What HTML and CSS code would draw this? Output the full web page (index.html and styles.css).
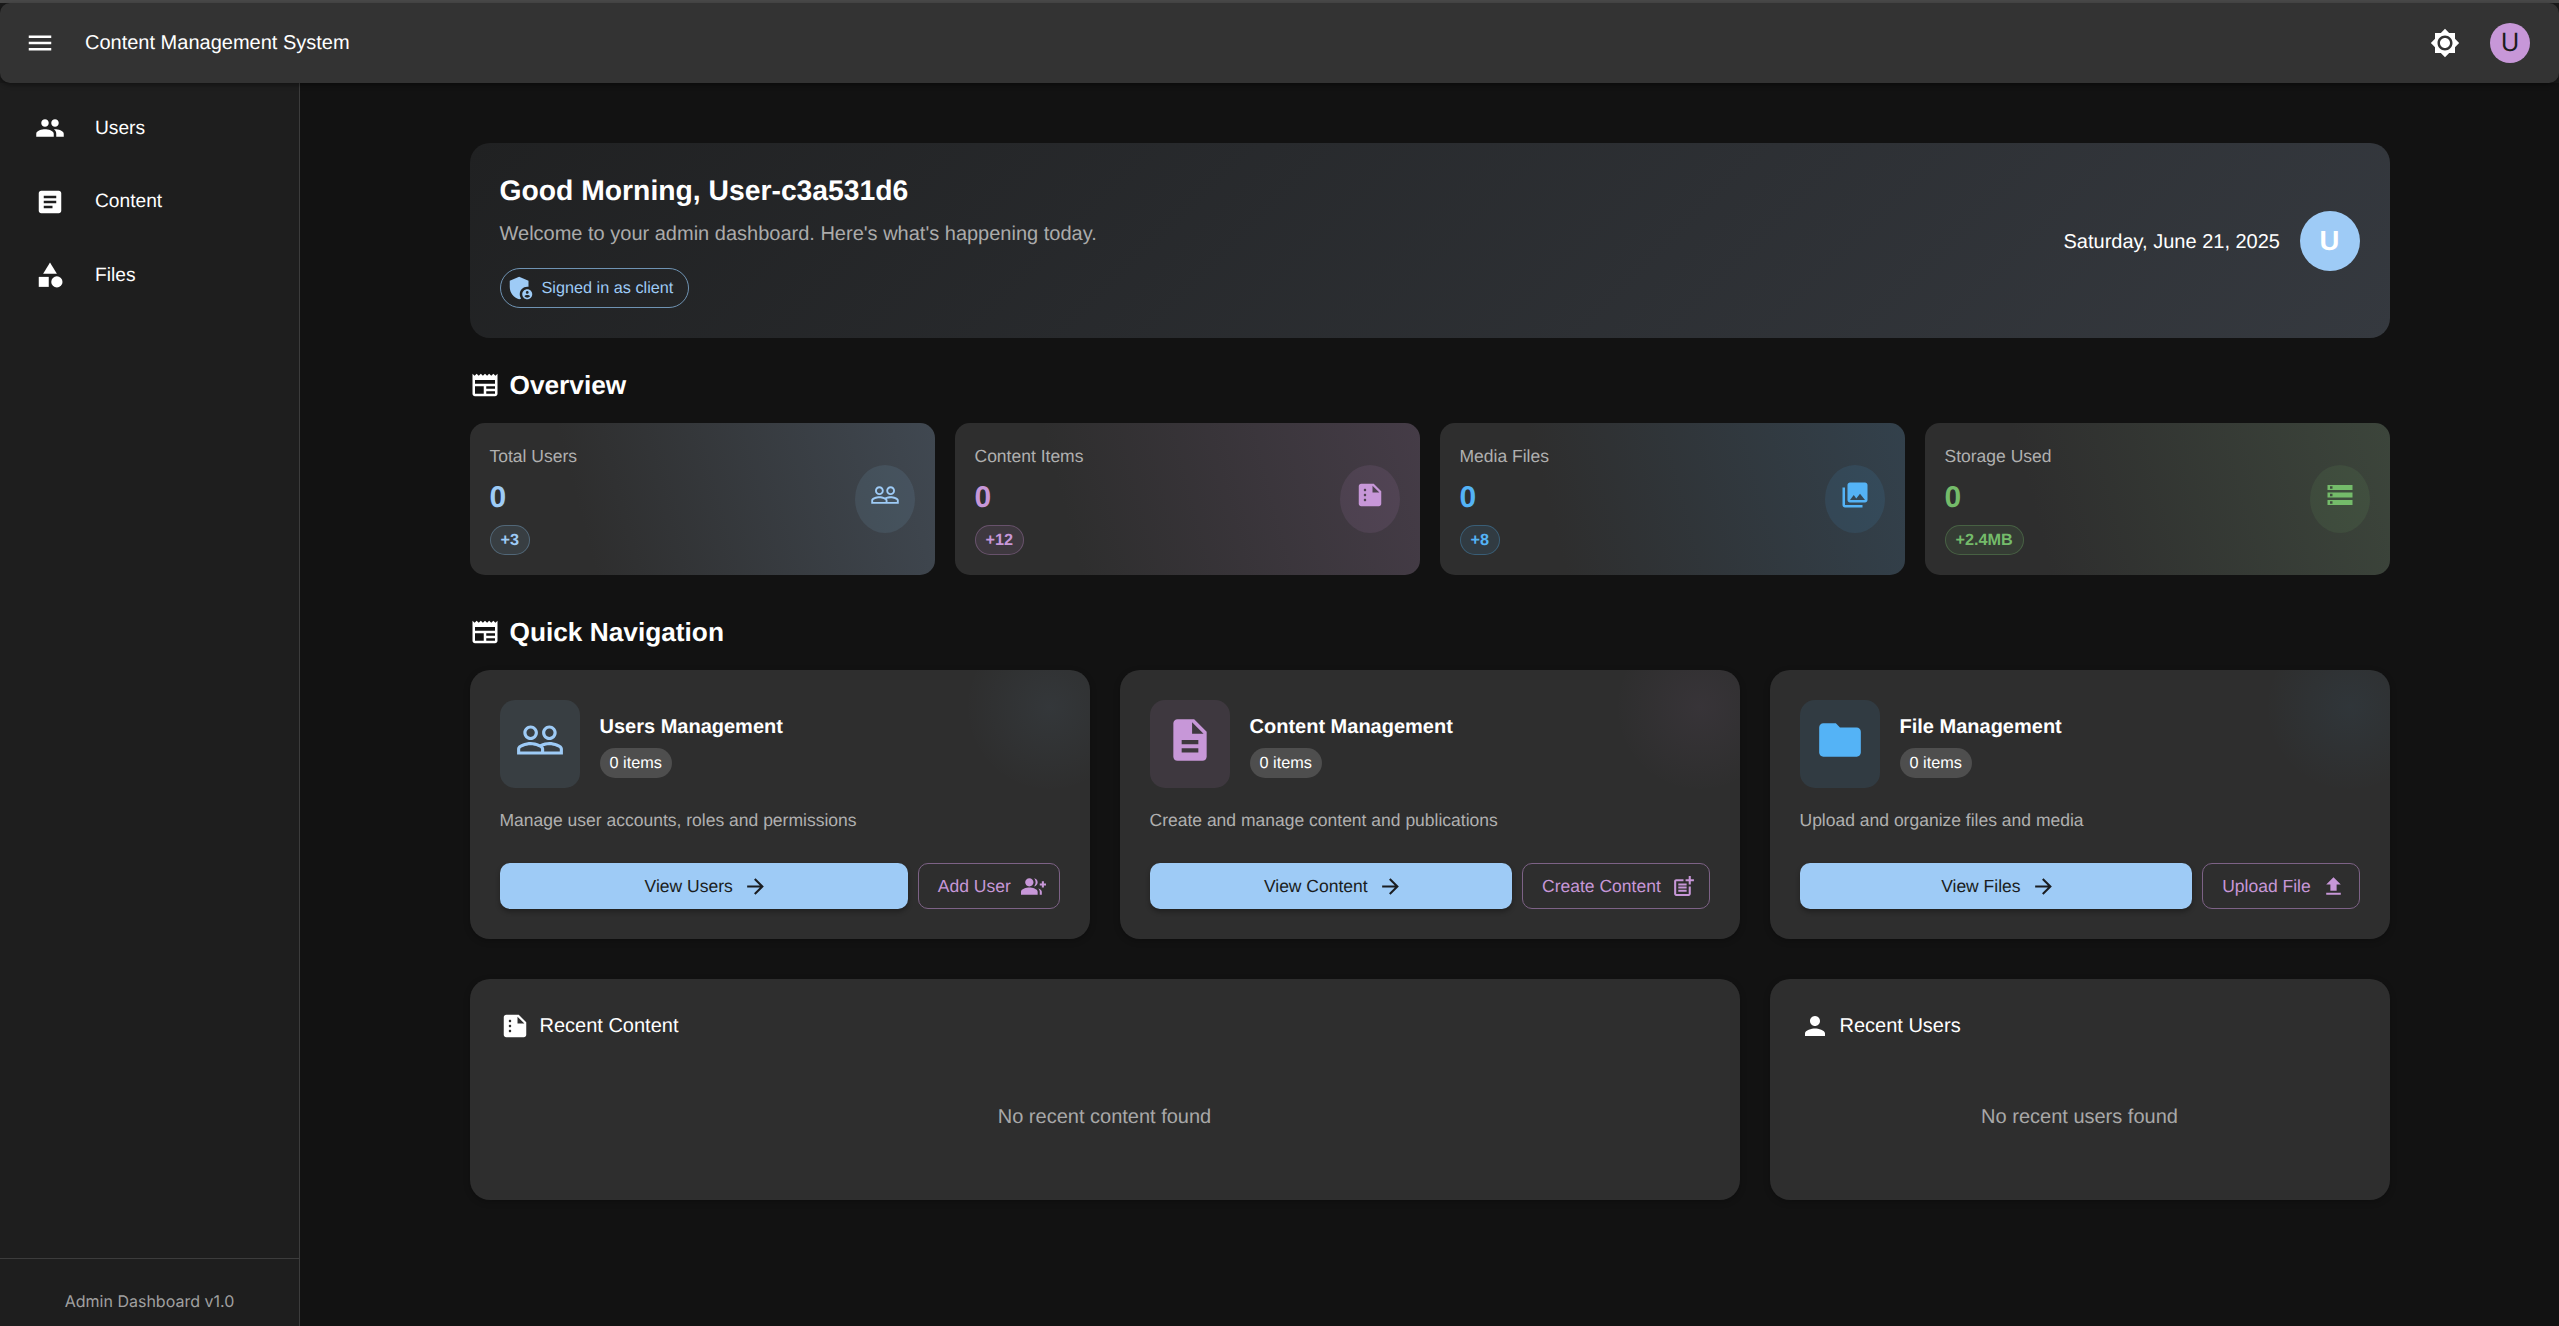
FILE: index.html
```html
<!DOCTYPE html>
<html lang="en">
<head>
<meta charset="utf-8">
<title>Content Management System</title>
<link rel="stylesheet" href="styles.css">
</head>
<body>
<svg class="defs" aria-hidden="true">
  <symbol id="i-menu" viewBox="0 0 24 24"><path d="M3 18h18v-2H3v2zm0-5h18v-2H3v2zm0-7v2h18V6H3z"/></symbol>
  <symbol id="i-bright" viewBox="0 0 24 24"><path d="M20 8.69V4h-4.69L12 .69 8.69 4H4v4.69L.69 12 4 15.31V20h4.69L12 23.31 15.31 20H20v-4.69L23.31 12 20 8.69zM12 18c-3.31 0-6-2.69-6-6s2.69-6 6-6 6 2.69 6 6-2.69 6-6 6zm0-10c-2.21 0-4 1.79-4 4s1.79 4 4 4 4-1.79 4-4-1.79-4-4-4z"/></symbol>
  <symbol id="i-people" viewBox="0 0 24 24"><path d="M16 11c1.66 0 2.99-1.34 2.99-3S17.66 5 16 5c-1.66 0-3 1.34-3 3s1.34 3 3 3zm-8 0c1.66 0 2.99-1.34 2.99-3S9.66 5 8 5C6.34 5 5 6.34 5 8s1.34 3 3 3zm0 2c-2.33 0-7 1.17-7 3.5V19h14v-2.5c0-2.33-4.67-3.5-7-3.5zm8 0c-.29 0-.62.02-.97.05 1.16.84 1.97 1.97 1.97 3.45V19h6v-2.5c0-2.33-4.67-3.5-7-3.5z"/></symbol>
  <symbol id="i-article" viewBox="0 0 24 24"><path d="M19 3H5c-1.1 0-2 .9-2 2v14c0 1.1.9 2 2 2h14c1.1 0 2-.9 2-2V5c0-1.1-.9-2-2-2zm-5 14H7v-2h7v2zm3-4H7v-2h10v2zm0-4H7V7h10v2z"/></symbol>
  <symbol id="i-category" viewBox="0 0 24 24"><path d="m12 2-5.5 9h11z"/><circle cx="17.5" cy="17.5" r="4.5"/><path d="M3 13.5h8v8H3z"/></symbol>
  <symbol id="i-admin" viewBox="0 0 24 24"><path d="M17 11c.34 0 .67.04 1 .09V6.27L10.5 3 3 6.27v4.91c0 4.54 3.2 8.79 7.5 9.82.55-.13 1.08-.32 1.6-.55-.69-.98-1.1-2.17-1.1-3.45 0-3.31 2.69-6 6-6z"/><path d="M17 13c-2.21 0-4 1.79-4 4s1.79 4 4 4 4-1.79 4-4-1.79-4-4-4zm0 1.38c.62 0 1.12.51 1.12 1.12s-.51 1.12-1.12 1.12-1.12-.51-1.12-1.12.5-1.12 1.12-1.12zm0 5.37c-.93 0-1.74-.46-2.24-1.17.05-.72 1.51-1.08 2.24-1.08s2.19.36 2.24 1.08c-.5.71-1.31 1.17-2.24 1.17z"/></symbol>
  <symbol id="i-news" viewBox="0 0 24 24"><path d="m22 3-1.67 1.67L18.67 3 17 4.67 15.33 3l-1.66 1.67L12 3l-1.67 1.67L8.67 3 7 4.67 5.33 3 3.67 4.67 2 3v16c0 1.1.9 2 2 2h16c1.1 0 2-.9 2-2V3zM11 19H4v-6h7v6zm9 0h-7v-2h7v2zm0-4h-7v-2h7v2zm0-4H4V8h16v3z"/></symbol>
  <symbol id="i-people-o" viewBox="0 0 24 24"><path d="M16.5 13c-1.2 0-3.07.34-4.5 1-1.43-.67-3.3-1-4.5-1C5.33 13 1 14.08 1 16.25V19h22v-2.75c0-2.17-4.33-3.25-6.5-3.25zm-4 4.5h-10v-1.25c0-.54 2.56-1.75 5-1.75s5 1.21 5 1.75v1.25zm9 0H14v-1.25c0-.46-.2-.86-.52-1.22.88-.3 1.96-.53 3.02-.53 2.44 0 5 1.21 5 1.75v1.25zM7.5 12c1.93 0 3.5-1.57 3.5-3.5S9.43 5 7.5 5 4 6.57 4 8.5 5.57 12 7.5 12zm0-5.5c1.1 0 2 .9 2 2s-.9 2-2 2-2-.9-2-2 .9-2 2-2zm9 5.5c1.93 0 3.5-1.57 3.5-3.5S18.43 5 16.5 5 13 6.57 13 8.5s1.57 3.5 3.5 3.5zm0-5.5c1.1 0 2 .9 2 2s-.9 2-2 2-2-.9-2-2 .9-2 2-2z"/></symbol>
  <symbol id="i-summarize" viewBox="0 0 24 24"><path d="M15 3H5c-1.1 0-1.99.9-1.99 2L3 19c0 1.1.89 2 1.99 2H19c1.1 0 2-.9 2-2V9l-6-6zM8 17c-.55 0-1-.45-1-1s.45-1 1-1 1 .45 1 1-.45 1-1 1zm0-4c-.55 0-1-.45-1-1s.45-1 1-1 1 .45 1 1-.45 1-1 1zm0-4c-.55 0-1-.45-1-1s.45-1 1-1 1 .45 1 1-.45 1-1 1zm6 1V4.5l5.5 5.5H14z"/></symbol>
  <symbol id="i-photos" viewBox="0 0 24 24"><path d="M22 16V4c0-1.1-.9-2-2-2H8c-1.1 0-2 .9-2 2v12c0 1.1.9 2 2 2h12c1.1 0 2-.9 2-2zm-11-4 2.03 2.71L16 11l4 5H8l3-4zM2 6v14c0 1.1.9 2 2 2h14v-2H4V6H2z"/></symbol>
  <symbol id="i-storage" viewBox="0 0 24 24"><path d="M2 20h20v-4H2v4zm2-3h2v2H4v-2zM2 4v4h20V4H2zm4 3H4V5h2v2zm-4 7h20v-4H2v4zm2-3h2v2H4v-2z"/></symbol>
  <symbol id="i-desc" viewBox="0 0 24 24"><path d="M14 2H6c-1.1 0-1.99.9-1.99 2L4 20c0 1.1.89 2 1.99 2H18c1.1 0 2-.9 2-2V8l-6-6zm2 16H8v-2h8v2zm0-4H8v-2h8v2zm-3-5V3.5L18.5 9H13z"/></symbol>
  <symbol id="i-folder" viewBox="0 0 24 24"><path d="M10 4H4c-1.1 0-1.99.9-1.99 2L2 18c0 1.1.9 2 2 2h16c1.1 0 2-.9 2-2V8c0-1.1-.9-2-2-2h-8l-2-2z"/></symbol>
  <symbol id="i-arrow" viewBox="0 0 24 24"><path d="m12 4-1.41 1.41L16.17 11H4v2h12.17l-5.58 5.59L12 20l8-8z"/></symbol>
  <symbol id="i-groupadd" viewBox="0 0 24 24"><path d="M22 9V7h-2v2h-2v2h2v2h2v-2h2V9zM8 12c2.21 0 4-1.79 4-4s-1.79-4-4-4-4 1.79-4 4 1.79 4 4 4zm0 1c-2.67 0-8 1.34-8 4v3h16v-3c0-2.66-5.33-4-8-4zm4.51-8.95C13.43 5.08 14 6.39 14 8s-.57 2.92-1.49 3.95C14.47 11.7 16 10.04 16 8s-1.53-3.7-3.49-3.95zM16.53 13.83C17.42 14.66 18 15.7 18 17v3h2v-3c0-1.45-1.59-2.51-3.47-3.17z"/></symbol>
  <symbol id="i-postadd" viewBox="0 0 24 24"><path d="M17 19.22H5V7h7V5H5c-1.1 0-2 .9-2 2v12c0 1.1.9 2 2 2h12c1.1 0 2-.9 2-2v-7h-2v7.22z"/><path d="M19 2h-2v3h-3c.01.01 0 2 0 2h3v2.99c.01.01 2 0 2 0V7h3V5h-3V2zM7 9h8v2H7zM7 12v2h8v-2h-3zM7 15h8v2H7z"/></symbol>
  <symbol id="i-upload" viewBox="0 0 24 24"><path d="M9 16h6v-6h4l-7-7-7 7h4zm-4 2h14v2H5z"/></symbol>
  <symbol id="i-person" viewBox="0 0 24 24"><path d="M12 12c2.21 0 4-1.79 4-4s-1.79-4-4-4-4 1.79-4 4 1.79 4 4 4zm0 2c-2.67 0-8 1.34-8 4v2h16v-2c0-2.66-5.33-4-8-4z"/></symbol>
</svg>

<div class="app">
  <header class="appbar">
    <svg class="ic ic-30"><use href="#i-menu"/></svg>
    <div class="app-title">Content Management System</div>
    <svg class="ic ic-30 theme"><use href="#i-bright"/></svg>
    <div class="app-avatar">U</div>
  </header>

  <div class="shell">
    <aside class="sidebar">
      <nav class="side-nav">
        <a class="side-item"><svg class="ic ic-30"><use href="#i-people"/></svg><span>Users</span></a>
        <a class="side-item"><svg class="ic ic-30"><use href="#i-article"/></svg><span>Content</span></a>
        <a class="side-item"><svg class="ic ic-30"><use href="#i-category"/></svg><span>Files</span></a>
      </nav>
      <div class="side-foot">Admin Dashboard v1.0</div>
    </aside>

    <main class="main">
      <div class="container">
        <section class="welcome">
          <div class="welcome-left">
            <h1 class="greet">Good Morning, User-c3a531d6</h1>
            <p class="greet-sub">Welcome to your admin dashboard. Here's what's happening today.</p>
            <div class="role-chip"><svg class="ic ic-30"><use href="#i-admin"/></svg><span>Signed in as client</span></div>
          </div>
          <div class="welcome-right">
            <div class="date">Saturday, June 21, 2025</div>
            <div class="welcome-avatar">U</div>
          </div>
        </section>

        <h2 class="section-head overview-head"><svg class="ic ic-30"><use href="#i-news"/></svg>Overview</h2>
        <div class="stats">
          <div class="stat stat-blue">
            <div class="stat-body"><div class="stat-label">Total Users</div><div class="stat-num">0</div><div class="stat-chip">+3</div></div>
            <div class="stat-icon"><svg class="ic ic-30"><use href="#i-people-o"/></svg></div>
          </div>
          <div class="stat stat-purple">
            <div class="stat-body"><div class="stat-label">Content Items</div><div class="stat-num">0</div><div class="stat-chip">+12</div></div>
            <div class="stat-icon"><svg class="ic ic-30"><use href="#i-summarize"/></svg></div>
          </div>
          <div class="stat stat-sky">
            <div class="stat-body"><div class="stat-label">Media Files</div><div class="stat-num">0</div><div class="stat-chip">+8</div></div>
            <div class="stat-icon"><svg class="ic ic-30"><use href="#i-photos"/></svg></div>
          </div>
          <div class="stat stat-green">
            <div class="stat-body"><div class="stat-label">Storage Used</div><div class="stat-num">0</div><div class="stat-chip">+2.4MB</div></div>
            <div class="stat-icon"><svg class="ic ic-30"><use href="#i-storage"/></svg></div>
          </div>
        </div>

        <h2 class="section-head nav-head"><svg class="ic ic-30"><use href="#i-news"/></svg>Quick Navigation</h2>
        <div class="cards">
          <div class="nav-card tint-blue">
            <div class="nav-top">
              <div class="nav-icon"><svg class="ic ic-50"><use href="#i-people-o"/></svg></div>
              <div class="nav-text"><div class="nav-title">Users Management</div><div class="count-chip">0 items</div></div>
            </div>
            <p class="nav-desc">Manage user accounts, roles and permissions</p>
            <div class="nav-actions">
              <a class="btn btn-main">View Users<svg class="ic ic-25 go"><use href="#i-arrow"/></svg></a>
              <a class="btn btn-line">Add User<svg class="ic ic-25"><use href="#i-groupadd"/></svg></a>
            </div>
          </div>
          <div class="nav-card tint-purple">
            <div class="nav-top">
              <div class="nav-icon"><svg class="ic ic-50"><use href="#i-desc"/></svg></div>
              <div class="nav-text"><div class="nav-title">Content Management</div><div class="count-chip">0 items</div></div>
            </div>
            <p class="nav-desc">Create and manage content and publications</p>
            <div class="nav-actions">
              <a class="btn btn-main">View Content<svg class="ic ic-25 go"><use href="#i-arrow"/></svg></a>
              <a class="btn btn-line">Create Content<svg class="ic ic-25"><use href="#i-postadd"/></svg></a>
            </div>
          </div>
          <div class="nav-card tint-sky">
            <div class="nav-top">
              <div class="nav-icon"><svg class="ic ic-50"><use href="#i-folder"/></svg></div>
              <div class="nav-text"><div class="nav-title">File Management</div><div class="count-chip">0 items</div></div>
            </div>
            <p class="nav-desc">Upload and organize files and media</p>
            <div class="nav-actions">
              <a class="btn btn-main">View Files<svg class="ic ic-25 go"><use href="#i-arrow"/></svg></a>
              <a class="btn btn-line">Upload File<svg class="ic ic-25"><use href="#i-upload"/></svg></a>
            </div>
          </div>
        </div>

        <div class="cards recent">
          <section class="recent-card recent-wide">
            <div class="recent-head"><svg class="ic ic-30"><use href="#i-summarize"/></svg>Recent Content</div>
            <p class="empty">No recent content found</p>
          </section>
          <section class="recent-card">
            <div class="recent-head"><svg class="ic ic-30"><use href="#i-person"/></svg>Recent Users</div>
            <p class="empty">No recent users found</p>
          </section>
        </div>
      </div>
    </main>
  </div>
</div>
</body>
</html>
```

FILE: styles.css
```css
* { box-sizing: border-box; }
html, body { height: 100%; }
body {
  margin: 0;
  background: #121212;
  color: #fff;
  font-family: "Liberation Sans", Arial, sans-serif;
  overflow: hidden;
  text-rendering: geometricPrecision;
}
.defs { position: absolute; width: 0; height: 0; }
.ic { fill: currentColor; display: block; flex: none; }
.ic-25 { width: 25px; height: 25px; }
.ic-30 { width: 30px; height: 30px; }
.ic-50 { width: 50px; height: 50px; }

.app {
  display: flex;
  flex-direction: column;
  height: 100vh;
  border-top: 3px solid #484848;
  background: #1a1a1a;
}
.appbar {
  height: 80px;
  flex: none;
  display: flex;
  align-items: center;
  padding: 0 29px 0 25px;
  background: #333;
  border-radius: 10px;
  box-shadow: 0 2px 5px rgba(0, 0, 0, .4);
  position: relative;
  z-index: 2;
}
.app-title { font-size: 20px; margin-left: 30px; flex: 1; }
.theme { margin-right: 30px; }
.app-avatar {
  width: 40px;
  height: 40px;
  border-radius: 50%;
  background: #c797d8;
  color: #1c1c1c;
  display: flex;
  align-items: center;
  justify-content: center;
  font-family: Inter, sans-serif;
  font-size: 25px;
}

.shell { flex: 1; display: flex; min-height: 0; }
.sidebar {
  width: 300px;
  flex: none;
  background: #1e1e1e;
  border-right: 1px solid #3c3c3c;
  display: flex;
  flex-direction: column;
}
.side-nav { flex: 1; padding-top: 8.25px; }
.side-item {
  display: flex;
  align-items: center;
  height: 73.5px;
  padding-left: 35px;
  gap: 30px;
  font-size: 19.2px;
}
.side-item span { padding-top: 1px; }
.side-foot {
  height: 68px;
  flex: none;
  border-top: 1px solid #3c3c3c;
  padding-top: 33px;
  text-align: center;
  font-family: Inter, sans-serif;
  font-size: 16px;
  line-height: 18px;
  color: #a0a0a0;
}

.main { flex: 1; min-width: 0; padding-top: 60px; background: #121212; }
.container { width: 1920px; margin: 0 auto; }

.welcome {
  height: 195px;
  padding: 30px;
  border-radius: 20px;
  display: flex;
  align-items: center;
  justify-content: space-between;
  background: linear-gradient(135deg, #202122 0%, #35393f 100%);
}
.greet { margin: 0; font-size: 28.3px; line-height: 35px; font-weight: 700; }
.greet-sub { margin: 9px 0 17px; font-size: 20px; line-height: 34px; color: #ababab; }
.role-chip {
  display: inline-flex;
  align-items: center;
  height: 40px;
  padding: 0 14.5px 0 5px;
  gap: 6px;
  border: 1px solid #6f93b3;
  border-radius: 20px;
  font-size: 16.25px;
  color: #9ecbf6;
}
.role-chip span { padding-top: 1px; }
.welcome-right { display: flex; align-items: center; gap: 19.5px; }
.date { font-size: 20px; padding-top: 3px; }
.welcome-avatar {
  width: 60px;
  height: 60px;
  border-radius: 50%;
  background: #9ecbf6;
  display: flex;
  align-items: center;
  justify-content: center;
  font-size: 27.5px;
  font-weight: 700;
}

.section-head {
  display: flex;
  align-items: center;
  gap: 10px;
  height: 30px;
  margin: 0;
  font-size: 26.25px;
  font-weight: 700;
}
.overview-head { margin: 32px 0 23px; }
.nav-head { margin: 42px 0 23px; }

.stats { display: grid; grid-template-columns: repeat(4, 1fr); gap: 20px; }
.stat {
  height: 152px;
  padding: 20px;
  border-radius: 15px;
  display: flex;
  justify-content: space-between;
  align-items: center;
}
.stat-blue { --c: #9ecbf6; --t: 144, 202, 249; background: linear-gradient(75deg, #2e2e2e 25%, #404851 100%); }
.stat-purple { --c: #c797d8; --t: 206, 147, 216; background: linear-gradient(75deg, #2e2e2e 25%, #453c47 100%); }
.stat-sky { --c: #54b3f6; --t: 79, 179, 246; background: linear-gradient(75deg, #2e2e2e 25%, #33414c 100%); }
.stat-green { --c: #74bb6a; --t: 116, 187, 106; background: linear-gradient(75deg, #2e2e2e 25%, #3c453b 100%); }
.stat-label { font-size: 17.5px; line-height: 22px; margin-top: 1.25px; color: #b0b0b0; }
.stat-num { font-size: 30px; line-height: 36px; margin-top: 13.25px; font-weight: 700; color: var(--c); }
.stat-chip {
  display: inline-block;
  height: 30px;
  line-height: 28px;
  padding: 0 10px;
  margin-top: 8.5px;
  border: 1px solid rgba(var(--t), .3);
  border-radius: 15px;
  background: rgba(var(--t), .1);
  color: var(--c);
  font-size: 16.25px;
  font-weight: 700;
}
.stat-icon {
  width: 60px;
  height: 68px;
  border-radius: 50%;
  padding: 15px 15px 23px;
  background: rgba(var(--t), .1);
  color: var(--c);
}

.cards { display: grid; grid-template-columns: repeat(3, 1fr); gap: 30px; }
.tint-blue { --c: #9ecbf6; --t: 144, 202, 249; }
.tint-purple { --c: #c797d8; --t: 206, 147, 216; }
.tint-sky { --c: #54b3f6; --t: 79, 179, 246; }
.nav-card {
  height: 269px;
  padding: 30px;
  border-radius: 20px;
  background-color: #2e2e2e;
  background-image: radial-gradient(circle 85px at calc(100% - 40px) 37px, rgba(var(--t), .06), rgba(var(--t), 0));
  background-repeat: no-repeat;
  box-shadow: 0 2px 6px rgba(0, 0, 0, .25);
}
.nav-top { display: flex; align-items: center; gap: 20px; }
.nav-icon {
  width: 80px;
  height: 88px;
  padding: 15px 15px 23px;
  border-radius: 15px;
  background: rgba(var(--t), .1);
  color: var(--c);
}
.nav-text { padding-top: 5px; }
.nav-title { font-size: 20px; line-height: 24px; font-weight: 700; }
.count-chip {
  display: inline-block;
  height: 30px;
  line-height: 30px;
  margin-top: 9px;
  padding: 0 10px;
  border-radius: 15px;
  background: #4e4e4e;
  font-size: 16.25px;
}
.nav-desc { margin: 20px 0 31px; font-size: 17.5px; line-height: 24px; color: #b0b0b0; }
.nav-actions { display: flex; gap: 10px; }
.btn {
  height: 46px;
  display: flex;
  align-items: center;
  justify-content: center;
  gap: 10px;
  border-radius: 10px;
  font-size: 17.5px;
}
.btn-main {
  flex: 1;
  background: #9ecbf6;
  color: #1a1d21;
  box-shadow: 0 3px 5px rgba(0, 0, 0, .3);
}
.go { margin-right: -5px; }
.btn-line {
  flex: none;
  padding: 0 12.75px 0 19px;
  border: 1px solid #7d6286;
  color: #c797d8;
}

.recent { margin-top: 40px; }
.recent-card {
  height: 221px;
  padding: 32px 30px 0;
  border-radius: 20px;
  background: #2e2e2e;
  box-shadow: 0 2px 6px rgba(0, 0, 0, .25);
}
.recent-wide { grid-column: span 2; }
.recent-head { display: flex; align-items: center; gap: 10px; font-size: 20px; height: 30px; }
.empty { margin: 63.5px 0 0; text-align: center; font-size: 20px; line-height: 24px; color: #a8a8a8; }
```
